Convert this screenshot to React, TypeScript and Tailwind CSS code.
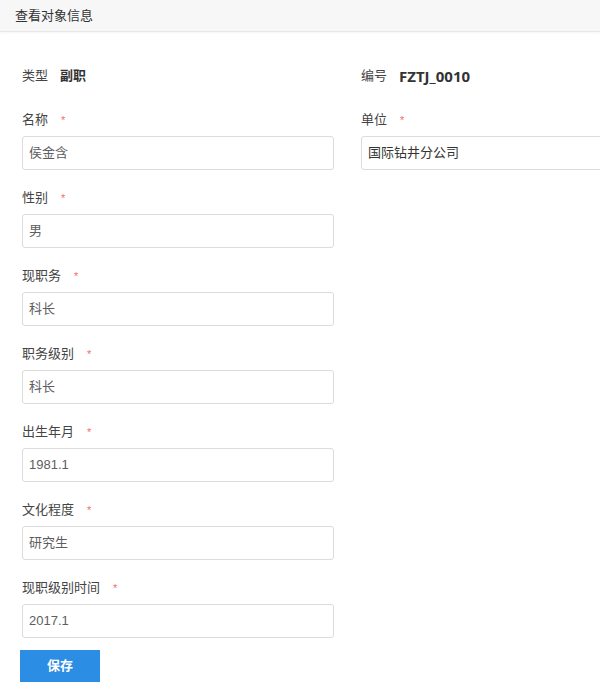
import React from "react";

const font = { fontFamily: '"Liberation Sans", "Noto Sans CJK SC", sans-serif' };

type Field = { label: string; value: string };

const leftFields: Field[] = [
  { label: "名称", value: "侯金含" },
  { label: "性别", value: "男" },
  { label: "现职务", value: "科长" },
  { label: "职务级别", value: "科长" },
  { label: "出生年月", value: "1981.1" },
  { label: "文化程度", value: "研究生" },
  { label: "现职级别时间", value: "2017.1" },
];

function FormField({ label, value, dark }: Field & { dark?: boolean }) {
  return (
    <div>
      <div className="flex h-5 items-center text-[13px] text-[#444]">
        <span>{label}</span>
        <span className="ml-[13px] text-[11px] text-[#f56c6c]">*</span>
      </div>
      <div
        className={`mt-[6px] flex h-[34px] items-center rounded-[3px] border border-[#dcdcdc] bg-white px-[6px] text-[13px] ${
          dark ? "text-[#333]" : "text-[#5e5e5e]"
        }`}
      >
        {value}
      </div>
    </div>
  );
}

export default function App() {
  return (
    <div className="h-[690px] w-[600px] overflow-hidden bg-white" style={font}>
      {/* header */}
      <div className="flex h-8 items-center border-b border-[#e8e8e8] bg-[#f7f7f7] pl-[15px] text-[13px] text-[#333] shadow-[0_1px_2px_rgba(0,0,0,0.04)]">
        查看对象信息
      </div>

      <div className="flex gap-[27px] pl-[22px] pt-[34px]">
        {/* left column */}
        <div className="w-[312px] shrink-0">
          <div className="mb-[24px] flex h-5 items-center text-[13px]">
            <span className="text-[#444]">类型</span>
            <span className="ml-[12px] font-bold text-[#333]">副职</span>
          </div>
          <div className="flex flex-col gap-[18px]">
            {leftFields.map((f) => (
              <FormField key={f.label} {...f} />
            ))}
          </div>
          <button className="mt-3 flex h-8 w-20 -translate-x-[2px] items-center justify-center bg-[#2b8de3] text-[13px] font-bold text-white">
            保存
          </button>
        </div>

        {/* right column */}
        <div className="w-[312px] shrink-0">
          <div className="mb-[24px] flex h-5 items-center text-[13px]">
            <span className="text-[#444]">编号</span>
            <span className="ml-[12px] text-[15px] font-bold text-[#333]" style={{ fontFamily: '"Open Sans", sans-serif' }}>
              FZTJ_0010
            </span>
          </div>
          <FormField label="单位" value="国际钻井分公司" dark />
        </div>
      </div>
    </div>
  );
}
